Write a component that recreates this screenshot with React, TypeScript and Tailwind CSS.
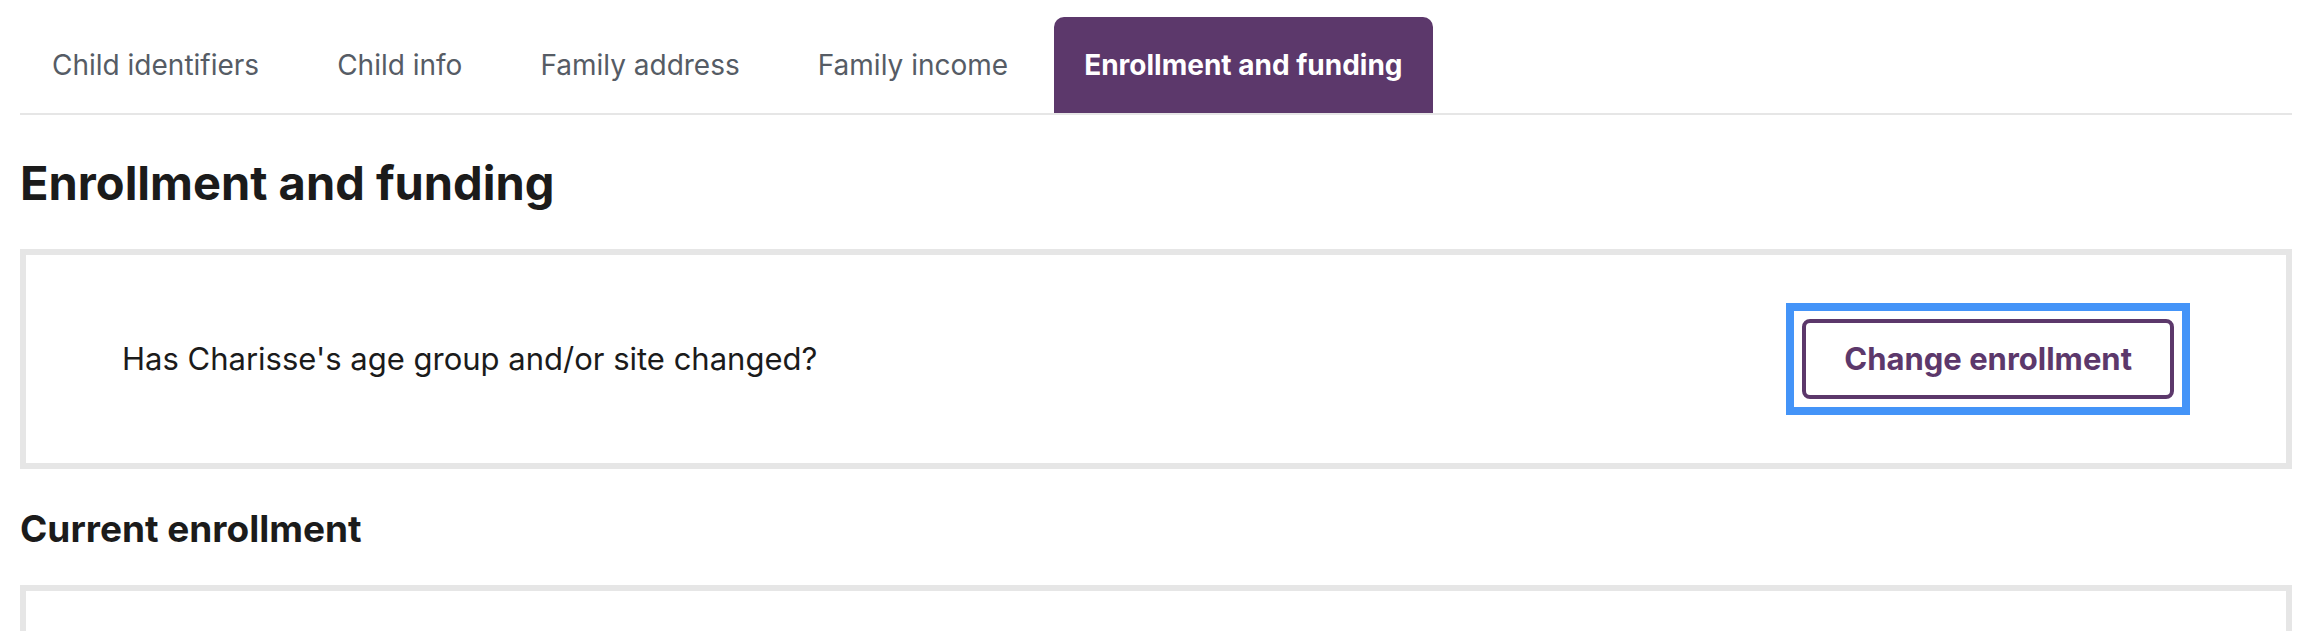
const tabs = ['Child identifiers', 'Child info', 'Family address', 'Family income'];

export default function App() {
  return (
    <main className="flex min-h-screen flex-col bg-white pt-[17px] pr-8 pl-5 font-['Inter','Liberation_Sans',sans-serif] text-[#1b1b1b]">
      <nav aria-label="Enrollment steps" className="flex gap-[14px] border-b-2 border-[#e6e6e6] leading-8">
        {tabs.map((tab) => (
          <a key={tab} href="#" className="px-8 py-8 text-[28px] whitespace-nowrap text-[#565c65]">
            {tab}
          </a>
        ))}
        <a
          href="#"
          aria-current="page"
          className="rounded-t-[10px] bg-[#5c386b] px-[30px] py-8 text-[28px] font-bold whitespace-nowrap text-white"
        >
          Enrollment and funding
        </a>
      </nav>

      <h1 className="mt-10 text-[47px] leading-[56px] font-bold">Enrollment and funding</h1>

      <section className="mt-[38px] flex items-center justify-between border-[6px] border-[#e6e6e6] py-12 pr-24 pl-24">
        <p className="text-[31px] leading-10">Has Charisse's age group and/or site changed?</p>
        <div className="border-8 border-[#4494f8] p-2">
          <button
            type="button"
            className="block rounded-lg border-4 border-[#5c386b] px-[38px] py-4 text-[31px] leading-10 font-bold whitespace-nowrap text-[#5c386b] outline-none"
          >
            Change enrollment
          </button>
        </div>
      </section>

      <h2 className="mt-9 text-[37px] leading-[48px] font-bold">Current enrollment</h2>
      <section aria-label="Current enrollment" className="mt-8 flex-1 border-[6px] border-b-0 border-[#e6e6e6]" />
    </main>
  );
}
